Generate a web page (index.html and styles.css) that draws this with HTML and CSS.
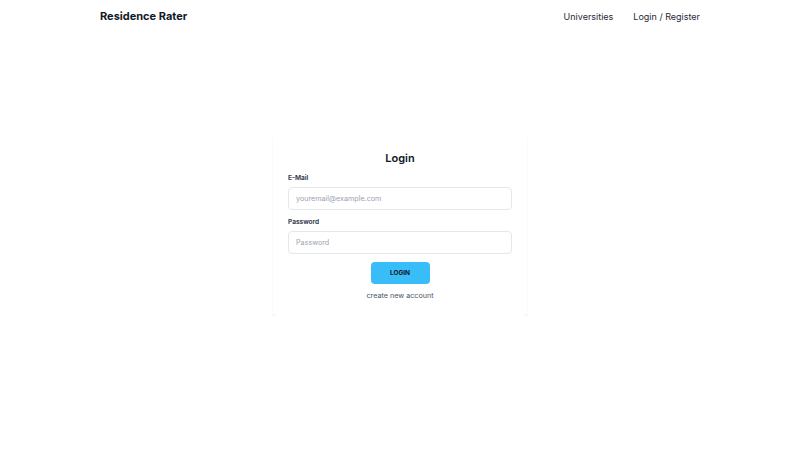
FILE: index.html
```html
<!DOCTYPE html>
<html>
<head>
<meta charset="utf-8">
<link rel="stylesheet" href="styles.css">
</head>
<body>
<header class="nav">
  <div class="brand">Residence Rater</div>
  <nav class="links">
    <a href="#">Universities</a>
    <a href="#">Login / Register</a>
  </nav>
</header>
<main class="main">
  <form class="card">
    <h1 class="title">Login</h1>
    <label class="label">E-Mail</label>
    <input class="input" type="text" placeholder="youremail@example.com">
    <label class="label">Password</label>
    <input class="input" type="password" placeholder="Password">
    <button class="btn" type="button">LOGIN</button>
    <a class="alt" href="#">create new account</a>
  </form>
</main>
</body>
</html>
```
FILE: styles.css
```css
* { box-sizing: border-box; }
html, body { margin: 0; padding: 0; background: #fff; }
body { font-family: Inter, "Noto Sans", sans-serif; color: #111827; }
.nav {
  width: 600px;
  margin: 0 auto;
  height: 32px;
  display: flex;
  align-items: center;
  justify-content: space-between;
}
.brand { font-weight: 700; font-size: 11px; color: #111827; }
.links { display: flex; gap: 20px; }
.links a { font-size: 9px; color: #1f2937; text-decoration: none; }
.main { display: flex; justify-content: center; padding-top: 101px; }
.card {
  width: 254px;
  padding: 16px 15px 15px;
  background: #fff;
  border-radius: 4px;
  box-shadow: 0 3px 3px -1px rgba(0,0,0,0.13), 0 0 1px rgba(0,0,0,0.04);
  display: flex;
  flex-direction: column;
}
.title { margin: 0 0 6px; text-align: center; font-size: 11px; font-weight: 600; line-height: 18px; }
.label { font-size: 6.5px; font-weight: 700; color: #374151; line-height: 10px; margin-bottom: 4px; }
.input {
  height: 23px;
  border: 1px solid #e5e7eb;
  border-radius: 4px;
  padding: 0 7px;
  font-family: inherit;
  font-size: 7.2px;
  margin-bottom: 7px;
  outline: none;
}
.input::placeholder { color: #9ca3af; }
.btn {
  align-self: center;
  width: 59px;
  height: 22px;
  margin-top: 1px;
  border: none;
  border-radius: 4px;
  background: #38bdf8;
  color: #0f172a;
  font-family: inherit;
  font-size: 6.5px;
  font-weight: 700;
}
.alt { align-self: center; margin-top: 7px; font-size: 7.2px; color: #4b5563; text-decoration: none; line-height: 10px; }
```
